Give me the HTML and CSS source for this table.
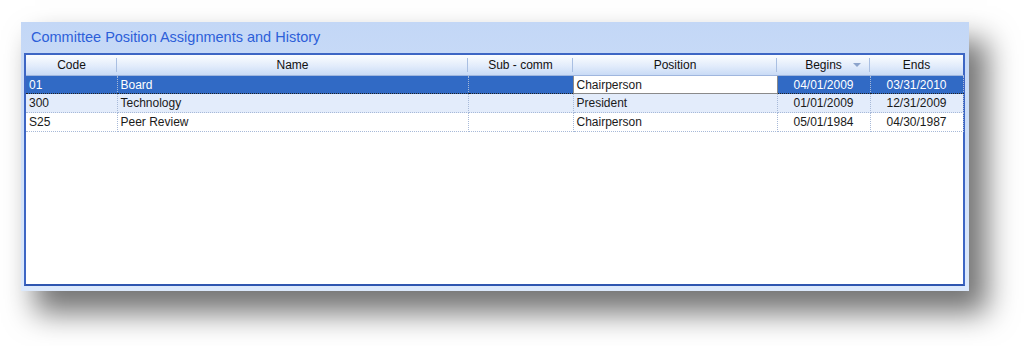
FILE: index.html
```html
<!DOCTYPE html>
<html>
<head>
    <title>Committee Positions</title>
    <link rel="stylesheet" href="styles.css">
</head>
<body>
    <div class="panel">
        <h2 class="title">Committee Position Assignments and History</h2>
        <div class="grid">
            <table>
                <colgroup>
                    <col class="c-code">
                    <col class="c-name">
                    <col class="c-sub">
                    <col class="c-pos">
                    <col class="c-date">
                    <col class="c-date">
                </colgroup>
                <thead>
                    <tr>
                        <th>Code</th>
                        <th>Name</th>
                        <th>Sub - comm</th>
                        <th>Position</th>
                        <th class="sorted">Begins<span class="sort-arrow"></span></th>
                        <th class="last">Ends</th>
                    </tr>
                </thead>
                <tbody>
                    <tr class="selected">
                        <td>01</td>
                        <td>Board</td>
                        <td></td>
                        <td class="editing">Chairperson</td>
                        <td class="date">04/01/2009</td>
                        <td class="date">03/31/2010</td>
                    </tr>
                    <tr class="alt">
                        <td>300</td>
                        <td>Technology</td>
                        <td></td>
                        <td>President</td>
                        <td class="date">01/01/2009</td>
                        <td class="date">12/31/2009</td>
                    </tr>
                    <tr>
                        <td>S25</td>
                        <td>Peer Review</td>
                        <td></td>
                        <td>Chairperson</td>
                        <td class="date">05/01/1984</td>
                        <td class="date">04/30/1987</td>
                    </tr>
                </tbody>
            </table>
        </div>
    </div>
</body>
</html>
```

FILE: styles.css
```css
html, body { height: 100%; }
body { margin: 0; background: #fff; font-family: "Liberation Sans", Arial, sans-serif; overflow: hidden; }

.panel { width: 941px; height: 264px; margin: 22px 0 0 21px; padding: 0 4px 5px 3px; display: flex; flex-direction: column;
    background: linear-gradient(#c3d7f6, #dce9fc); box-shadow: 16px 20px 28px 2px rgba(0, 0, 0, 0.55); }
.title { margin: 0; height: 31px; line-height: 30px; padding-left: 7px; font-size: 14.5px; font-weight: normal; color: #2d5fd9; }
.grid { flex: 1; background: #fff; border: 2px solid #3d66c4; border-bottom-color: #2f56b0; }

table { border-collapse: collapse; table-layout: fixed; width: 100%; font-size: 12px; color: #1a1a1a; }
.c-code { width: 91px; }
.c-name { width: 351px; }
.c-sub { width: 105px; }
.c-pos { width: 204px; }
.c-date { width: 93px; }

th { height: 20px; padding: 0; font-weight: normal; text-align: center; position: relative; color: #111;
    background: linear-gradient(#fbfdff, #e2ecfb 55%, #c9dbf6); border-bottom: 1px solid #9fb6de; }
th::after { content: ""; position: absolute; right: 0; top: 3px; bottom: 3px; width: 1px; background: #a9bfe2; }
th.last::after { display: none; }
.sort-arrow { position: absolute; right: 9px; top: 8px; border-left: 4px solid transparent; border-right: 4px solid transparent;
    border-top: 4px solid #8ca4cc; }

td { height: 18px; padding: 0 0 0 3px; white-space: nowrap; border-right: 1px dotted #a7b9d8; border-bottom: 1px dotted #a7b9d8; }
td.date { text-align: center; padding: 0; }
tr.alt td { background: #e3ecfb; }
tr.selected td { height: 17px; background: #316ac5; color: #fff; border-top: 1px dotted #222; border-bottom: 1px dotted #222; }
tr.selected td.editing { background: #fff; color: #1a1a1a; border: 1px solid #8a8a8a; }
```
